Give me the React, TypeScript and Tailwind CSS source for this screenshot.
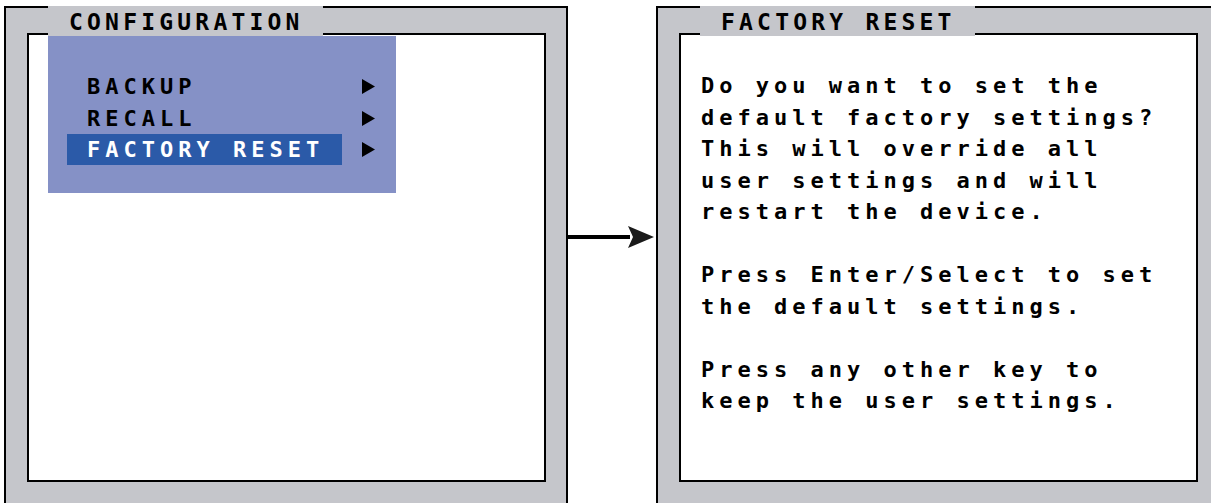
import React from 'react';

const mono = "font-['DejaVu_Sans_Mono','Liberation_Mono',monospace] font-bold";

const Triangle: React.FC = () => (
  <svg width="13" height="15" viewBox="0 0 13 15" className="shrink-0">
    <path d="M0 0 L13 7.5 L0 15 Z" fill="#000" />
  </svg>
);

type PanelProps = {
  title: string;
  children: React.ReactNode;
};

const Panel: React.FC<PanelProps> = ({ title, children }) => (
  <div className="relative w-[564px] h-[520px] shrink-0 border-2 border-black bg-[#c5c6cb] pl-[21px] pr-[20px] pt-[25px]">
    <div
      className={`absolute left-[42px] top-[-2px] w-[275px] h-[30px] bg-[#c5c6cb] pl-[21px] pt-[5px] text-[23px] leading-[23px] tracking-[4.2px] text-black ${mono}`}
    >
      {title}
    </div>
    <div className="h-[449px] border-2 border-black bg-white">{children}</div>
  </div>
);

const menuItems = ['BACKUP', 'RECALL', 'FACTORY RESET'];

const App: React.FC = () => {
  const selected = 2;
  return (
    <div className="w-[1211px] h-[503px] overflow-hidden bg-white">
      <div className="flex items-start pt-[6px] pl-[4px]">
        <Panel title="CONFIGURATION">
          <div className="ml-[19px] mt-[1px] w-[348px] h-[157px] bg-[#8591c6] pt-[35px] pl-[19px]">
            {menuItems.map((item, i) => (
              <div key={item} className="flex items-center h-[31.5px]">
                <div
                  className={`w-[275px] h-[31px] flex items-center pl-[20px] text-[22px] tracking-[5px] ${mono} ${
                    i === selected ? 'bg-[#2b5aa8] text-white' : 'text-black'
                  }`}
                >
                  {item}
                </div>
                <div className="ml-[20px]">
                  <Triangle />
                </div>
              </div>
            ))}
          </div>
        </Panel>

        <div className="w-[88px] shrink-0 flex items-center mt-[220px]">
          <div className="h-[4px] w-[62px] bg-black" />
          <svg width="26" height="22" viewBox="0 0 26 22" className="-ml-[2px]">
            <path d="M0 0 L26 11 L0 22 L5 11 Z" fill="#1a1a1a" />
          </svg>
        </div>

        <Panel title="FACTORY RESET">
          <div className={`pl-[20px] pt-[35px] text-[22px] leading-[31.5px] tracking-[5px] text-black ${mono}`}>
            <p>Do you want to set the</p>
            <p>default factory settings?</p>
            <p>This will override all</p>
            <p>user settings and will</p>
            <p>restart the device.</p>
            <p className="mt-[31.5px]">Press Enter/Select to set</p>
            <p>the default settings.</p>
            <p className="mt-[31.5px]">Press any other key to</p>
            <p>keep the user settings.</p>
          </div>
        </Panel>
      </div>
    </div>
  );
};

export default App;
